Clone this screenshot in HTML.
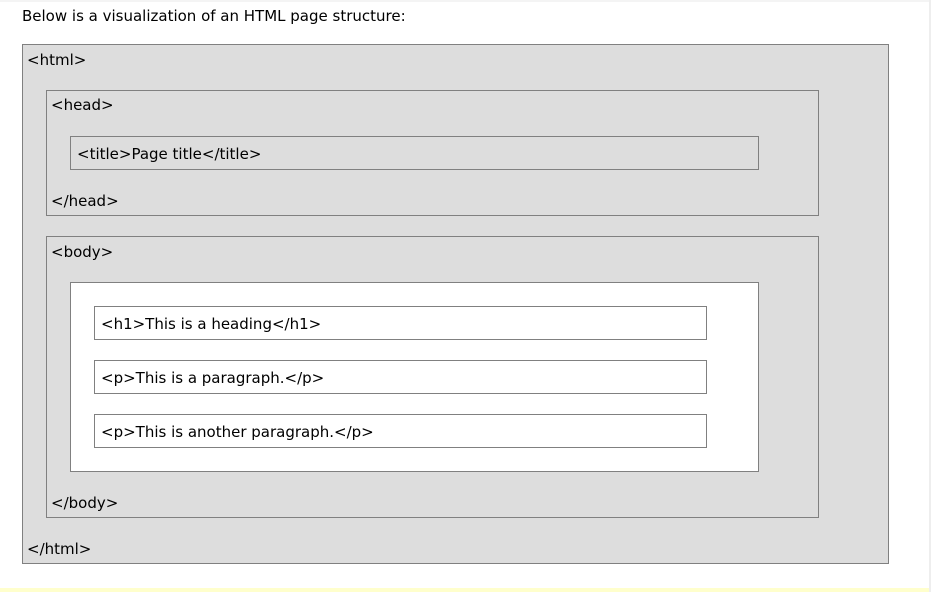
<!DOCTYPE html>
<html><head><style>
body{margin:0;width:931px;height:592px;background:#fff;position:relative;overflow:hidden;font-family:"DejaVu Sans","Liberation Sans",sans-serif;font-size:15px;color:#000}
.b{position:absolute;border:1px solid #808080;box-sizing:border-box}
.t{position:absolute;white-space:nowrap;line-height:16px}
</style></head><body>
<div style="position:absolute;left:0;top:0;width:931px;height:2px;background:#f4f4f4"></div>
<div style="position:absolute;right:0;top:0;width:2px;height:592px;background:#eee"></div>
<div style="position:absolute;left:0;top:588px;width:929px;height:4px;background:#ffffcc"></div>
<div class="t" style="left:22px;top:8px">Below is a visualization of an HTML page structure:</div>
<div class="b" style="left:22px;top:44px;width:867px;height:520px;background:#dddddd"></div>
<div class="t" style="left:27px;top:52px">&lt;html&gt;</div>
<div class="b" style="left:46px;top:90px;width:773px;height:126px"></div>
<div class="t" style="left:51px;top:97px">&lt;head&gt;</div>
<div class="b" style="left:70px;top:136px;width:689px;height:34px"></div>
<div class="t" style="left:77px;top:146px">&lt;title&gt;Page title&lt;/title&gt;</div>
<div class="t" style="left:51px;top:193px">&lt;/head&gt;</div>
<div class="b" style="left:46px;top:236px;width:773px;height:282px"></div>
<div class="t" style="left:51px;top:244px">&lt;body&gt;</div>
<div class="b" style="left:70px;top:282px;width:689px;height:190px;background:#fff"></div>
<div class="b" style="left:94px;top:306px;width:613px;height:34px"></div>
<div class="t" style="left:101px;top:316px">&lt;h1&gt;This is a heading&lt;/h1&gt;</div>
<div class="b" style="left:94px;top:360px;width:613px;height:34px"></div>
<div class="t" style="left:101px;top:370px">&lt;p&gt;This is a paragraph.&lt;/p&gt;</div>
<div class="b" style="left:94px;top:414px;width:613px;height:34px"></div>
<div class="t" style="left:101px;top:424px">&lt;p&gt;This is another paragraph.&lt;/p&gt;</div>
<div class="t" style="left:51px;top:495px">&lt;/body&gt;</div>
<div class="t" style="left:27px;top:541px">&lt;/html&gt;</div>
</body></html>
